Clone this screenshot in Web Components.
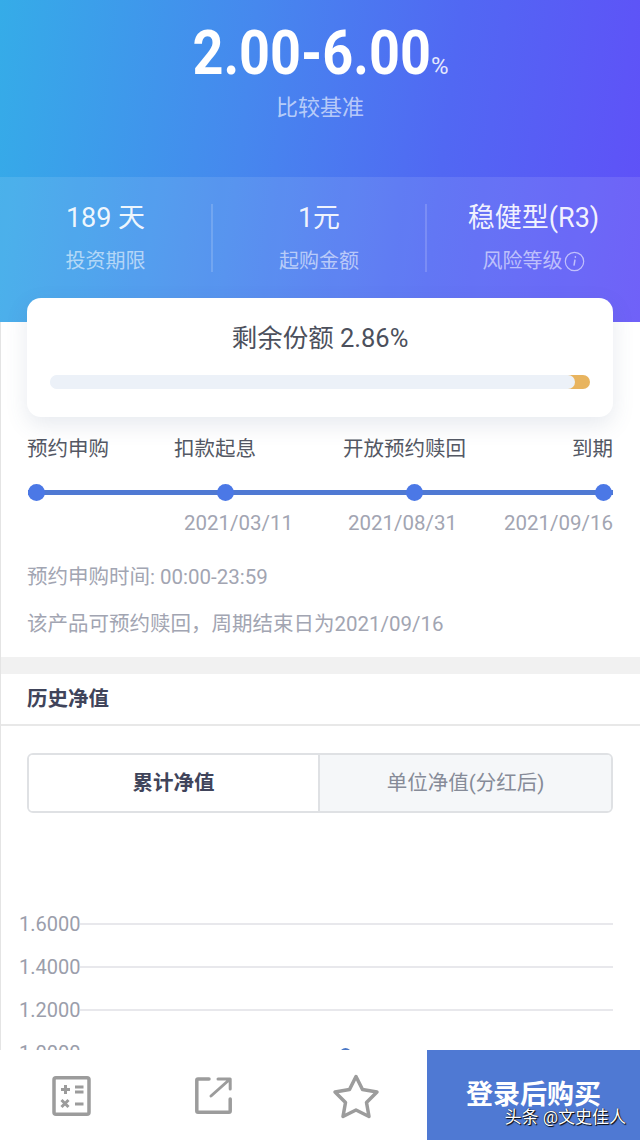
<!DOCTYPE html>
<html lang="zh-CN">
<head>
    <meta charset="UTF-8">
    <title>产品详情</title>
    <style>
        html, body {
            margin: 0;
            background: #fff;
        }

        body {
            width: 640px;
            height: 1140px;
            overflow: hidden;
            font-family: Roboto, "Noto Sans CJK SC", sans-serif;
        }

        product-page {
            height: 1140px;
        }
    </style>
</head>
<body>
    <product-page>
        <rate-hero rate="2.00-6.00" label="比较基准">
            <stat-cell value="189 天" label="投资期限"></stat-cell>
            <stat-cell value="1元" label="起购金额"></stat-cell>
            <stat-cell value="稳健型(R3)" label="风险等级" info></stat-cell>
        </rate-hero>
        <quota-card percent="2.86"></quota-card>
        <date-timeline></date-timeline>
        <section-gap></section-gap>
        <section-title>历史净值</section-title>
        <tab-switch active="累计净值" other="单位净值(分红后)"></tab-switch>
        <nav-chart></nav-chart>
        <buy-bar slot="footer"></buy-bar>
    </product-page>

    <script>
        class ProductPage extends HTMLElement {
            constructor() {
                super();
                this.attachShadow({mode: 'open'}).innerHTML = `
                    <style>
                        :host {
                            display: flex;
                            flex-direction: column;
                            position: relative;
                        }
                        main {
                            flex: 1;
                            min-height: 0;
                            overflow: hidden;
                            display: flow-root;
                        }
                        /* thin page edge below the header */
                        .edge {
                            position: absolute;
                            left: 0;
                            top: 322px;
                            bottom: 90px;
                            width: 1px;
                            background: #e4e4e4;
                        }
                    </style>
                    <main><slot></slot></main>
                    <slot name="footer"></slot>
                    <div class="edge"></div>
                `;
            }
        }

        class RateHero extends HTMLElement {
            constructor() {
                super();
                this.attachShadow({mode: 'open'}).innerHTML = `
                    <style>
                        :host {
                            display: block;
                            height: 322px;
                            color: #fff;
                            background: linear-gradient(97deg, #35ace8 0%, #4688ee 38%, #5168f3 68%, #6050f8 100%);
                        }
                        .top {
                            height: 177px;
                            box-sizing: border-box;
                            padding-top: 16px;
                            text-align: center;
                        }
                        .rate {
                            height: 74px;
                            line-height: 74px;
                            white-space: nowrap;
                        }
                        /* the figure is set narrower than the font's normal width */
                        .num {
                            display: inline-block;
                            font-size: 61px;
                            font-weight: 700;
                            margin: 0 -15px;
                            transform: scaleX(.885);
                        }
                        .pct {
                            font-size: 24px;
                            margin-left: 0;
                            opacity: .85;
                        }
                        .label {
                            margin-top: 2px;
                            font-size: 22px;
                            line-height: 32px;
                            color: rgba(255, 255, 255, .62);
                        }
                        .stats {
                            height: 145px;
                            box-sizing: border-box;
                            padding-top: 27px;
                            display: grid;
                            grid-template-columns: 211px 214px 215px;
                            align-items: start;
                            background: rgba(255, 255, 255, .1);
                        }
                    </style>
                    <div class="top">
                        <div class="rate"><span class="num"></span><span class="pct">%</span></div>
                        <div class="label"></div>
                    </div>
                    <div class="stats"><slot></slot></div>
                `;
                this.shadowRoot.querySelector('.num').textContent = this.getAttribute('rate');
                this.shadowRoot.querySelector('.label').textContent = this.getAttribute('label');
            }
        }

        class StatCell extends HTMLElement {
            constructor() {
                super();
                const info = this.hasAttribute('info') ? `
                    <svg width="21" height="21" viewBox="0 0 21 21" fill="none" stroke="currentColor" style="margin-left:1px">
                        <circle cx="10.5" cy="10.5" r="9.2" stroke-width="1.2"/>
                        <path d="M11 8.6 10 14.6" stroke-width="1.5"/>
                        <circle cx="11.3" cy="6" r=".5" stroke-width="1"/>
                    </svg>` : '';
                this.attachShadow({mode: 'open'}).innerHTML = `
                    <style>
                        :host {
                            display: block;
                            height: 68px;
                            text-align: center;
                            box-sizing: border-box;
                            border-left: 2px solid rgba(255, 255, 255, .16);
                        }
                        :host(:first-child) {
                            border-left: 0;
                        }
                        .value {
                            font-size: 27px;
                            line-height: 28px;
                            white-space: nowrap;
                            color: rgba(255, 255, 255, .92);
                        }
                        .label {
                            margin-top: 16px;
                            font-size: 20px;
                            line-height: 26px;
                            color: rgba(255, 255, 255, .58);
                            display: flex;
                            justify-content: center;
                            align-items: center;
                        }
                    </style>
                    <div class="value"></div>
                    <div class="label"><span class="text"></span>${info}</div>
                `;
                this.shadowRoot.querySelector('.value').textContent = this.getAttribute('value');
                this.shadowRoot.querySelector('.text').textContent = this.getAttribute('label');
            }
        }

        class QuotaCard extends HTMLElement {
            constructor() {
                super();
                this.attachShadow({mode: 'open'}).innerHTML = `
                    <style>
                        :host {
                            display: block;
                            position: relative;
                            box-sizing: border-box;
                            height: 119px;
                            margin: -24px 27px 0;
                            padding: 23px 23px 0;
                            background: #fff;
                            border-radius: 14px;
                            box-shadow: 0 8px 22px rgba(70, 90, 130, .13);
                        }
                        .title {
                            font-size: 25.5px;
                            line-height: 34px;
                            text-align: center;
                            color: #4c505c;
                        }
                        .track {
                            margin-top: 20px;
                            height: 14px;
                            border-radius: 7px;
                            background: linear-gradient(90deg, #ecf1f8 50%, #e8b45f 50%);
                            overflow: hidden;
                        }
                        .rest {
                            height: 100%;
                            width: 97.14%;
                            border-radius: 7px;
                            background: #ecf1f8;
                        }
                    </style>
                    <div class="title"></div>
                    <div class="track"><div class="rest"></div></div>
                `;
                this.shadowRoot.querySelector('.title').textContent = `剩余份额 ${this.getAttribute('percent')}%`;
            }
        }

        class DateTimeline extends HTMLElement {
            constructor() {
                super();
                this.attachShadow({mode: 'open'}).innerHTML = `
                    <style>
                        :host {
                            display: block;
                            padding: 18px 27.5px 0 27px;
                            height: 240px;
                            box-sizing: border-box;
                        }
                        .steps, .dates {
                            display: grid;
                            white-space: nowrap;
                        }
                        .steps {
                            grid-template-columns: 147px 169px 229px 1fr;
                            font-size: 20.5px;
                            line-height: 28px;
                            color: #545864;
                        }
                        .track {
                            margin: 21px 0 0 .5px;
                            display: flex;
                            justify-content: space-between;
                            background: linear-gradient(#4f79d3, #4f79d3) center / 100% 5px no-repeat;
                        }
                        .track i {
                            width: 17px;
                            height: 17px;
                            border-radius: 50%;
                            background: #4b78e6;
                        }
                        .dates {
                            margin-top: 8px;
                            grid-template-columns: 157px 164px 156px 1fr;
                            font-size: 20.5px;
                            line-height: 28px;
                            color: #a2a5b2;
                        }
                        .note {
                            font-size: 20.5px;
                            line-height: 28px;
                            color: #a2a5b2;
                            white-space: nowrap;
                        }
                        .dates + .note {
                            margin-top: 26px;
                        }
                        .note + .note {
                            margin-top: 19px;
                        }
                    </style>
                    <div class="steps">
                        <span>预约申购</span><span>扣款起息</span><span>开放预约赎回</span><span>到期</span>
                    </div>
                    <div class="track"><i></i><i></i><i></i><i></i></div>
                    <div class="dates">
                        <span></span><span>2021/03/11</span><span>2021/08/31</span><span>2021/09/16</span>
                    </div>
                    <div class="note">预约申购时间: 00:00-23:59</div>
                    <div class="note">该产品可预约赎回，周期结束日为2021/09/16</div>
                `;
            }
        }

        class SectionGap extends HTMLElement {
            constructor() {
                super();
                this.attachShadow({mode: 'open'}).innerHTML = `
                    <style>
                        :host {
                            display: block;
                            height: 17px;
                            background: #f1f1f1;
                        }
                    </style>
                `;
            }
        }

        class SectionTitle extends HTMLElement {
            constructor() {
                super();
                this.attachShadow({mode: 'open'}).innerHTML = `
                    <style>
                        :host {
                            display: block;
                            box-sizing: border-box;
                            height: 52px;
                            padding: 11px 27px 0;
                            border-bottom: 2px solid #e8e8e8;
                            font-size: 20.5px;
                            line-height: 28px;
                            font-weight: 700;
                            color: #40445a;
                        }
                    </style>
                    <slot></slot>
                `;
            }
        }

        class TabSwitch extends HTMLElement {
            constructor() {
                super();
                this.attachShadow({mode: 'open'}).innerHTML = `
                    <style>
                        :host {
                            display: grid;
                            grid-template-columns: 291px 1fr;
                            box-sizing: border-box;
                            height: 60px;
                            margin: 27px 27px 0 27px;
                            border: 2px solid #dfe1e4;
                            border-radius: 6px;
                            overflow: hidden;
                            font-size: 20.5px;
                        }
                        div {
                            display: flex;
                            align-items: center;
                            justify-content: center;
                            white-space: nowrap;
                            padding-bottom: 4px;
                        }
                        .on {
                            font-weight: 700;
                            color: #40445a;
                            background: #fff;
                            border-right: 2px solid #dfe1e4;
                        }
                        .off {
                            color: #868b98;
                            background: #f5f7f9;
                        }
                    </style>
                    <div class="on"></div>
                    <div class="off"></div>
                `;
                this.shadowRoot.querySelector('.on').textContent = this.getAttribute('active');
                this.shadowRoot.querySelector('.off').textContent = this.getAttribute('other');
            }
        }

        class NavChart extends HTMLElement {
            constructor() {
                super();
                const rows = ['1.6000', '1.4000', '1.2000', '1.0000'].map(v =>
                    `<div class="row"><span>${v}</span><i></i></div>`).join('');
                this.attachShadow({mode: 'open'}).innerHTML = `
                    <style>
                        :host {
                            display: block;
                            position: relative;
                            padding: 89px 27px 0 19px;
                        }
                        .row {
                            display: flex;
                            align-items: center;
                            height: 43px;
                        }
                        .row span {
                            width: 61px;
                            font-size: 20px;
                            color: #9b9eab;
                        }
                        .row i {
                            flex: 1;
                            height: 2px;
                            background: #e8e8ec;
                        }
                        .row:last-child i {
                            visibility: hidden;
                        }
                        .point {
                            position: absolute;
                            left: 340px;
                            top: 235px;
                            width: 11px;
                            height: 11px;
                            border-radius: 50%;
                            background: #4b78c6;
                        }
                    </style>
                    ${rows}
                    <div class="point"></div>
                `;
            }
        }

        class BuyBar extends HTMLElement {
            constructor() {
                super();
                this.attachShadow({mode: 'open'}).innerHTML = `
                    <style>
                        :host {
                            display: flex;
                            position: relative;
                            flex: none;
                            height: 90px;
                            background: #fff;
                        }
                        .tools {
                            width: 427px;
                            display: grid;
                            grid-template-columns: 143px 142px 142px;
                            justify-items: center;
                            padding-top: 24px;
                            box-sizing: border-box;
                        }
                        svg {
                            fill: none;
                            stroke: #9c9c9c;
                            stroke-width: 3.5;
                            stroke-linejoin: round;
                            stroke-linecap: round;
                            display: block;
                        }
                        .buy {
                            flex: 1;
                            box-sizing: border-box;
                            padding-top: 32px;
                            text-align: center;
                            font-size: 27px;
                            line-height: 26px;
                            font-weight: 700;
                            color: #fff;
                            background: #4f79d3;
                        }
                        /* account mark laid over the button */
                        .mark {
                            position: absolute;
                            right: 14px;
                            bottom: 14px;
                            font-size: 17px;
                            line-height: 18px;
                            color: #fff;
                            white-space: nowrap;
                            text-shadow: 1px 1px 1px #000, 0 0 1px #000;
                        }
                    </style>
                    <div class="tools">
                        <svg width="42" height="44" viewBox="0 0 42 44" style="margin-top:2px">
                            <rect x="3" y="1.750" width="35" height="36.500" rx="2"/>
                            <path stroke-width="3" d="M10 13.500h9M14.500 9v9M24 11h8.500M24 16h8.500M10.500 24l7 7M17.500 24l-7 7M24 28h8.500" stroke-linecap="butt"/>
                        </svg>
                        <svg width="42" height="44" viewBox="0 0 42 44" style="margin-top:3px">
                            <path d="M16 2H5a1.200 1.200 0 0 0-1.200 1.200V34a1.200 1.200 0 0 0 1.200 1.200H36a1.200 1.200 0 0 0 1.200-1.200V22"/>
                            <path stroke-width="3" d="M18 19 36 3M25 2H37.200V12"/>
                        </svg>
                        <svg width="50" height="46" viewBox="0 0 50 46">
                            <path d="M25 2.500 31.500 15.500 46 18 35.500 28.500 38 42.500 25 36 12 42.500 14.500 28.500 4 18 18.500 15.500Z"/>
                        </svg>
                    </div>
                    <div class="buy">登录后购买</div>
                    <div class="mark">头条 @文史佳人</div>
                `;
            }
        }

        customElements.define('product-page', ProductPage);
        customElements.define('rate-hero', RateHero);
        customElements.define('stat-cell', StatCell);
        customElements.define('quota-card', QuotaCard);
        customElements.define('date-timeline', DateTimeline);
        customElements.define('section-gap', SectionGap);
        customElements.define('section-title', SectionTitle);
        customElements.define('tab-switch', TabSwitch);
        customElements.define('nav-chart', NavChart);
        customElements.define('buy-bar', BuyBar);
    </script>
</body>
</html>
